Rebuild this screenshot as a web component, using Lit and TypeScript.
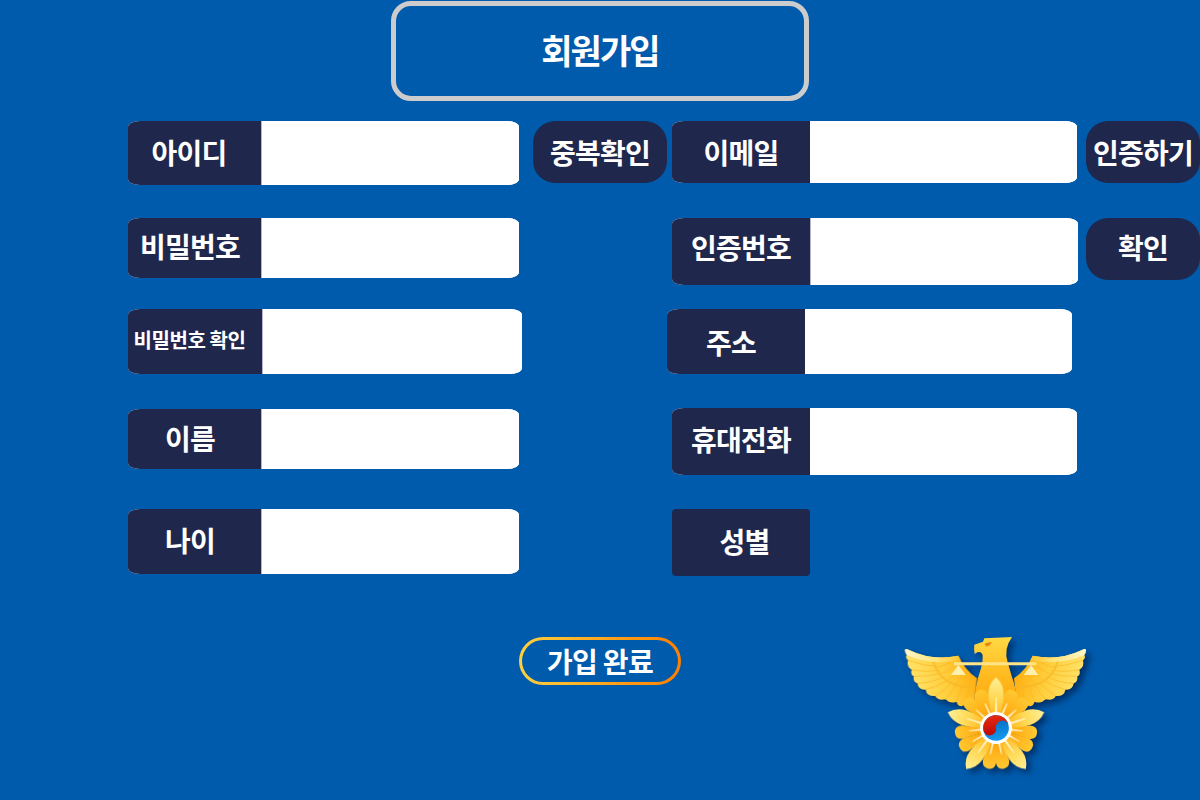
import { LitElement, html, svg, css } from "lit";
import { customElement, property } from "lit/decorators.js";

type Field = { label: string; cls: string; action?: string; only?: boolean };

const LEFT: Field[] = [
  { label: "아이디", cls: "id", action: "중복확인" },
  { label: "비밀번호", cls: "pw" },
  { label: "비밀번호 확인", cls: "pw2" },
  { label: "이름", cls: "name" },
  { label: "나이", cls: "age" },
];

const RIGHT: Field[] = [
  { label: "이메일", cls: "email", action: "인증하기" },
  { label: "인증번호", cls: "code", action: "확인" },
  { label: "주소", cls: "addr" },
  { label: "휴대전화", cls: "phone" },
  { label: "성별", cls: "gender", only: true },
];

@customElement("police-emblem")
export class PoliceEmblem extends LitElement {
  static styles = css`
    :host { display: block; width: 200px; height: 160px; }
    svg { display: block; overflow: visible; }
    .bird { filter: drop-shadow(12px 12px 9px rgba(0, 20, 60, 0.6)); }
  `;

  private wing() {
    return svg`
      <path fill="url(#wing)" d="M30 74 Q33 70 42 75 Q110 108 190 92 Q207 132 246 160 L238 232 Q226 240 214 234 Q203 250 189 240 L184 230 Q166 238 151 223 Q128 228 121 213 Q95 215 92 194 Q70 196 67 175 Q54 172 56 154 Q45 150 50 134 Q34 126 39 106 Q30 98 35 90 Z"/>
      <g fill="none" stroke="#f8b624" stroke-width="3" opacity=".65">
        <path d="M39 106 Q85 122 132 126"/><path d="M50 134 Q90 142 136 136"/>
        <path d="M56 154 Q100 156 142 144"/><path d="M67 175 Q110 174 150 154"/>
        <path d="M92 194 Q130 184 158 165"/><path d="M121 213 Q147 196 170 173"/>
        <path d="M151 223 Q170 203 184 178"/><path d="M184 230 Q194 207 202 182"/>
        <path d="M214 234 Q218 208 221 183"/>
        <path stroke-width="7" d="M114 108 Q132 165 180 178 Q210 190 242 184"/>
        <path d="M132 126 L168 112 M142 146 L180 124 M158 166 L192 137 M182 178 L206 146"/>
      </g>
      <path fill="url(#edge)" d="M30 74 Q33 70 42 75 Q110 108 190 92 L196 105 Q110 124 36 91 Q29 84 30 74 Z"/>`;
  }

  render() {
    const round = [0, 72, 144, 216, 288].flatMap((a) => [a + 25, a + 47]);
    const pointed = [72, 288, 144, 216, 0];
    const rays = Array.from({ length: 15 }, (_, i) => i * 24);
    return html`<svg width="200" height="160" viewBox="0 0 600 480" aria-hidden="true">
      <defs>
        <linearGradient id="wing" gradientUnits="userSpaceOnUse" x1="50" y1="160" x2="240" y2="110">
          <stop offset="0" stop-color="#ffe268"/><stop offset=".5" stop-color="#ffce3c"/><stop offset="1" stop-color="#ffac0c"/>
        </linearGradient>
        <linearGradient id="edge" gradientUnits="userSpaceOnUse" x1="30" y1="80" x2="195" y2="100">
          <stop offset="0" stop-color="#fff7c8"/><stop offset=".6" stop-color="#ffe37a"/><stop offset="1" stop-color="#ffc42c"/>
        </linearGradient>
        <linearGradient id="body" x1="0" y1="0" x2="0" y2="1">
          <stop offset="0" stop-color="#ffda45"/><stop offset=".45" stop-color="#ffb91e"/><stop offset="1" stop-color="#ff9e00"/>
        </linearGradient>
        <linearGradient id="round" gradientUnits="userSpaceOnUse" x1="303" y1="185" x2="303" y2="290">
          <stop offset="0" stop-color="#ffc933"/><stop offset="1" stop-color="#ff9c00"/>
        </linearGradient>
        <linearGradient id="point" gradientUnits="userSpaceOnUse" x1="303" y1="157" x2="303" y2="290">
          <stop offset="0" stop-color="#fff09a"/><stop offset=".45" stop-color="#ffda57"/><stop offset="1" stop-color="#ffae10"/>
        </linearGradient>
        <linearGradient id="red" x1="0" y1="0" x2="0" y2="1">
          <stop offset="0" stop-color="#e52a12"/><stop offset="1" stop-color="#bd0905"/>
        </linearGradient>
        <linearGradient id="blue" x1="0" y1="0" x2="0" y2="1">
          <stop offset="0" stop-color="#0065b8"/><stop offset="1" stop-color="#159cf0"/>
        </linearGradient>
      </defs>
      <g class="bird">
        ${this.wing()}
        <g transform="translate(603 0) scale(-1 1)">${this.wing()}</g>
        <path fill="url(#body)" d="M268 40 L351 36 Q325 72 338 112 L350 153 Q364 190 369 245 L303 300 L238 245 Q237 190 258 130 Q264 110 263 92 Q260 78 247 82 Q244 84 239 87 Q236 72 238 59 L264 50 Z"/>
        <path fill="#e88709" d="M268 57 Q276 51 291 52 L283 62 Q278 62 275 65 Z"/>
        <path fill="#ffe48a" d="M177 112 H424 V121 H177 Z"/>
        <path fill="#fff0b0" d="M190 120 L212 150 H168 Z M408 120 L430 150 H386 Z"/>
        ${round.map((a) => svg`<path transform="rotate(${a} 303 309)" fill="url(#round)" d="M303 309 L283 209 Q282 185 303 185 Q324 185 323 209 Z"/>`)}
        ${pointed.map((a) => svg`<path transform="rotate(${a} 303 309)" fill="url(#point)" d="M303 157 Q326 177 326 209 Q326 245 303 309 Q280 245 280 209 Q280 177 303 157 Z"/>`)}
        ${rays.map((a) => svg`<path transform="rotate(${a} 303 309)" fill="#fffce8" d=${a % 72 === 0 ? "M300 270 L302 217 H304.5 L306 270 Z" : "M300 270 L302 228 H304.5 L306 270 Z"}/>`)}
      </g>
      <circle cx="303" cy="309" r="48" fill="#fff"/>
      <g transform="rotate(-9 303 309)">
        <circle cx="303" cy="309" r="38.5" fill="url(#blue)"/>
        <path fill="url(#red)" d="M264.5 309 A38.5 38.5 0 0 1 341.5 309 A19.25 19.25 0 0 0 303 309 A19.25 19.25 0 0 1 264.5 309 Z"/>
      </g>
    </svg>`;
  }
}

@customElement("form-field")
export class FormField extends LitElement {
  @property({ type: Object }) field!: Field;

  static styles = css`
    :host { display: block; }
    .row { display: flex; align-items: flex-start; --h: 64px; --w: 391px; --l: 133px; --dx: 0px; --dy: 0px; }
    .bar { display: flex; flex: none; width: var(--w); height: var(--h); border-radius: 12px / 6px; background: #fff; overflow: hidden; }
    .label { box-sizing: border-box; flex: none; width: var(--l); height: 100%; background: #1f274d; border-right: var(--seam, 0) solid #b5b7c9; display: flex; align-items: center; justify-content: center; padding: 0 var(--pr, 0) var(--pb, 0) var(--pl, 0); }
    .text { flex: none; color: #fff; font: 700 var(--fs, 28px)/1 "Noto Sans CJK KR", sans-serif; letter-spacing: var(--ls, -0.7px); white-space: pre; }
    .input { flex: 1; min-width: 0; height: 100%; box-sizing: border-box; border: 0; padding: 0 12px; outline: 0; background: #fff; font: 20px "Noto Sans CJK KR", sans-serif; }
    .button { flex: none; border: 0; padding: 0 0 1px; height: 62px; border-radius: 22px; background: #1f274d; display: flex; align-items: center; justify-content: center; }
    .id, .pw, .pw2, .name, .age { --l: 134px; --seam: 1px; }
    .id { --pr: 11px; --pb: 3px; }
    .id .button { width: 134px; margin-left: 14px; }
    .pw { --h: 60px; --pr: 9px; --pb: 4px; }
    .pw2 { --h: 65px; --w: 394px; --l: 135px; --fs: 20px; --ls: -0.4px; --pr: 11px; --pb: 3px; }
    .name { --h: 60px; --pr: 9px; --pb: 2px; }
    .age { --h: 65px; --pr: 9px; --pb: 3px; }
    .email, .code, .addr, .phone, .gender { --w: 405px; --l: 138px; }
    .email { --h: 62px; }
    .email .button { width: 114px; margin-left: 9px; }
    .code { --h: 67px; --w: 406px; --l: 139px; --seam: 1px; --pb: 9px; }
    .code .button { width: 114px; margin-left: 8px; padding-bottom: 4px; }
    .addr { --h: 65px; --pr: 10px; margin-left: -5px; }
    .phone { --h: 67px; --pb: 6px; }
    .gender { --h: 67px; --w: 138px; --pl: 7px; --pb: 4px; }
    .gender .bar { border-radius: 4px; background: none; }
  `;

  render() {
    const f = this.field;
    return html`<div class="row ${f.cls}">
      <label class="bar">
        <span class="label"><span class="text">${f.label}</span></span>
        ${f.only ? "" : html`<input class="input" aria-label=${f.label} />`}
      </label>
      ${f.action ? html`<button class="button"><span class="text">${f.action}</span></button>` : ""}
    </div>`;
  }
}

@customElement("app-root")
export class AppRoot extends LitElement {
  static styles = css`
    :host { display: block; width: 1200px; height: 800px; overflow: hidden; background: #005bac; }
    .page { display: flex; flex-direction: column; align-items: center; height: 800px; box-sizing: border-box; padding-top: 1px; }
    .title { box-sizing: border-box; flex: none; width: 418px; height: 100px; margin: 0; padding-bottom: 3px; border: 5px solid #ccc; border-radius: 20px; display: flex; align-items: center; justify-content: center; color: #fff; font: 700 34px/1 "Noto Sans CJK KR", sans-serif; letter-spacing: -1.9px; }
    .form { flex: none; display: grid; grid-template-columns: 544px 528px; grid-template-rows: 97px 91px 99px 101px 67px; grid-auto-flow: column; width: 1072px; margin: 20px 0 0 128px; }
    .name { margin-top: 1px; }
    .phone { margin-top: 0; }
    .name-gap { padding-top: 1px; }
    .footer { display: grid; grid-template-columns: 519px 162px 1fr; width: 1200px; margin-top: 49px; align-items: start; }
    .submit { grid-column: 2; box-sizing: border-box; width: 162px; height: 48px; margin-top: 12px; border: 3px solid transparent; border-radius: 24px; background: linear-gradient(#005bac, #005bac) padding-box, linear-gradient(90deg, #ffd13f, #ff7f00) border-box; color: #fff; padding: 0 0 1px; font: 700 28px/1 "Noto Sans CJK KR", sans-serif; letter-spacing: -0.7px; }
    .emblem { margin-left: 214px; }
  `;

  render() {
    const cells = [...LEFT, ...RIGHT];
    return html`<main class="page">
      <h1 class="title">회원가입</h1>
      <section class="form">
        ${cells.map((f) => html`<form-field class=${f.cls === "name" ? "name-gap" : ""} .field=${f}></form-field>`)}
      </section>
      <footer class="footer">
        <button class="submit">가입 완료</button>
        <police-emblem class="emblem"></police-emblem>
      </footer>
    </main>`;
  }
}
